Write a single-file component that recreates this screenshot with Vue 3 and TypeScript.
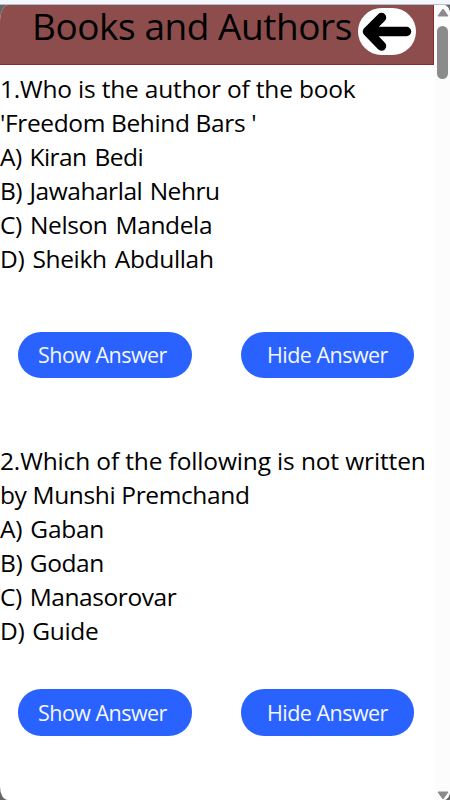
<script setup lang="ts">
interface Line {
  text: string
  spacing: number
  word: number
}
interface Question {
  id: number
  lines: Line[]
}

const questions: Question[] = [
  {
    id: 1,
    lines: [
      { text: '1.Who is the author of the book', spacing: -0.19, word: 0 },
      { text: "'Freedom Behind Bars '", spacing: -0.37, word: 0 },
      { text: 'A) Kiran Bedi', spacing: -0.54, word: 2 },
      { text: 'B) Jawaharlal Nehru', spacing: -0.47, word: 1.5 },
      { text: 'C) Nelson Mandela', spacing: -0.37, word: 2 },
      { text: 'D) Sheikh Abdullah', spacing: -0.33, word: 2 },
    ],
  },
  {
    id: 2,
    lines: [
      { text: '2.Which of the following is not written', spacing: -0.14, word: 0 },
      { text: 'by Munshi Premchand', spacing: -0.37, word: 0 },
      { text: 'A) Gaban', spacing: -0.25, word: 2 },
      { text: 'B) Godan', spacing: -0.4, word: 1.5 },
      { text: 'C) Manasorovar', spacing: -0.43, word: 2 },
      { text: 'D) Guide', spacing: -0.35, word: 2 },
    ],
  },
]
</script>

<template>
  <div class="window">
    <div class="chrome"></div>
    <div class="viewport">
      <main class="page">
        <header class="header">
          <h1 class="title">Books and Authors</h1>
          <button class="back" aria-label="Back">
            <svg width="58" height="47" viewBox="0 0 58 47">
              <path d="M23.5 9.5 9.5 23.5 23.5 38M10 23.5H48.5" fill="none" stroke="#000" stroke-width="9.5" stroke-linecap="round" stroke-linejoin="round" />
            </svg>
          </button>
        </header>
        <section v-for="q in questions" :key="q.id" class="question" :class="'q' + q.id">
          <p v-for="line in q.lines" :key="line.text" class="line">
            <span :style="{ letterSpacing: line.spacing + 'px', wordSpacing: line.word + 'px' }">{{ line.text }}</span>
          </p>
          <div class="actions">
            <button class="btn show">Show Answer</button>
            <button class="btn hide">Hide Answer</button>
          </div>
        </section>
      </main>
      <aside class="scrollbar">
        <svg class="up" width="12" height="9" viewBox="0 0 12 9"><path d="M6 1 11 8H1Z" fill="#8b8b8b" stroke="#8b8b8b" stroke-linejoin="round" /></svg>
        <div class="thumb"></div>
        <svg class="down" width="12" height="9" viewBox="0 0 12 9"><path d="M6 8 11 1H1Z" fill="#8b8b8b" stroke="#8b8b8b" stroke-linejoin="round" /></svg>
      </aside>
    </div>
  </div>
</template>

<style>
body {
  background: #666;
  overflow: hidden;
}
</style>

<style scoped>
.window {
  width: 450px;
  height: 800px;
  display: flex;
  flex-direction: column;
  overflow: hidden;
  font-family: 'Open Sans', 'Noto Sans', sans-serif;
  color: #000;
}
.chrome {
  box-sizing: border-box;
  height: 5px;
  flex: none;
  background: #f3f7fd;
  border-bottom: 1px solid #b5bfce;
}
.viewport {
  flex: 1;
  display: flex;
  min-height: 0;
  border-radius: 8px 6px 6px 8px / 16px 9px 9px 13px;
  overflow: hidden;
  background: #fff;
}
.page {
  width: 434px;
  flex: none;
}
.header {
  box-sizing: border-box;
  height: 60px;
  display: flex;
  align-items: flex-start;
  background: #8d4d4d;
  border-right: 1px solid #882b2d;
  border-bottom: 1px solid #882b2d;
}
.title {
  margin: 0;
  padding-left: 32px;
  width: 358px;
  box-sizing: border-box;
  flex: none;
  font-size: 37px;
  font-weight: 400;
  line-height: 42px;
  letter-spacing: -0.45px;
  white-space: nowrap;
}
.back {
  margin: 3px 0 0;
  padding: 0;
  width: 58px;
  height: 47px;
  border: 0;
  border-radius: 24px;
  background: #fff;
}
.back svg {
  display: block;
}
.question {
  padding-top: 7px;
}
.q2 {
  padding-top: 66px;
}
.line {
  margin: 0;
  height: 34px;
  font-size: 24.5px;
  line-height: 34px;
  white-space: nowrap;
}
.actions {
  display: flex;
  gap: 49px;
  padding: 56px 0 0 18px;
}
.q2 .actions {
  padding-top: 41px;
}
.btn {
  width: 174px;
  height: 46px;
  padding: 0;
  border: 0;
  border-radius: 23px;
  background: #2962ff;
  color: #f4f7ff;
  font-family: inherit;
  font-size: 21.5px;
  line-height: 46px;
  letter-spacing: -0.53px;
  white-space: nowrap;
  text-align: left;
}
.q2 .btn {
  height: 47px;
  line-height: 48px;
}
.show {
  padding-left: 20px;
}
.hide {
  width: 173px;
  padding-left: 26px;
}
.scrollbar {
  box-sizing: border-box;
  width: 16px;
  padding: 3px 2px 0 3px;
  display: flex;
  flex-direction: column;
  background: #fcfcfc;
}
.thumb {
  width: 11px;
  height: 53px;
  margin-top: 9px;
  border-radius: 6px;
  background: #8b8b8b;
}
.down {
  margin-top: auto;
}
</style>
